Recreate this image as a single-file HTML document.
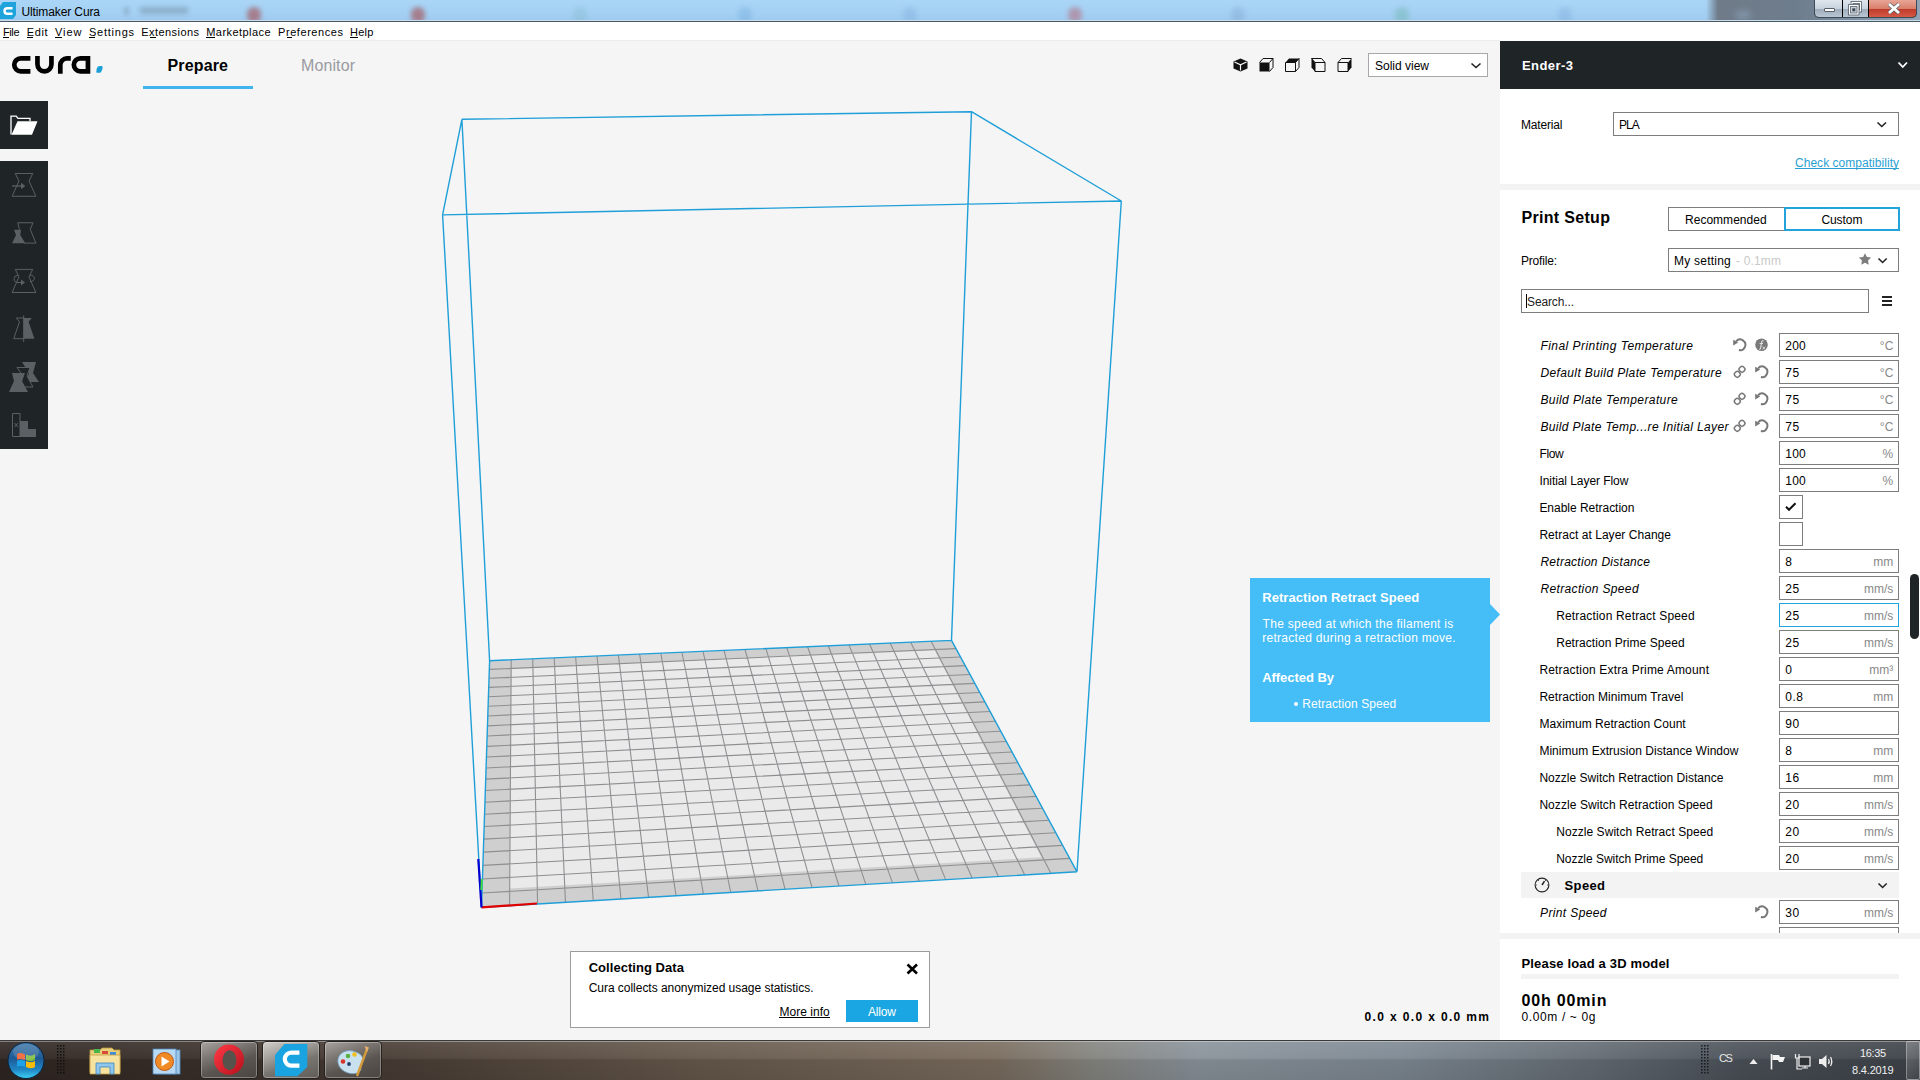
<!DOCTYPE html>
<html><head><meta charset="utf-8"><title>Ultimaker Cura</title>
<style>
html,body{margin:0;padding:0;width:1920px;height:1080px;overflow:hidden;background:#f5f5f5;font-family:"Liberation Sans",sans-serif;}
.abs{position:absolute;}
.t{position:absolute;white-space:nowrap;font-family:"Liberation Sans",sans-serif;}
.box{position:absolute;box-sizing:border-box;}
</style></head><body>

<div class="box" style="left:0;top:0;width:1920px;height:22px;background:linear-gradient(#aad5f6,#a4d0f3 60%,#9ec9ee);"></div>
<div class="box" style="left:1706px;top:0;width:214px;height:21px;background:linear-gradient(90deg,rgba(111,123,136,0) 0px,#6f7b88 12px,#6e7d8d 90px,#8797aa 180px,#93a3b6);"></div>
<div class="abs" style="left:1735px;top:10px;width:16px;height:10px;border-radius:8px;background:#8aa0b8;filter:blur(3px);opacity:.6"></div>
<div class="abs" style="left:247px;top:7px;width:14px;height:16px;border-radius:7px;background:#a56a74;filter:blur(2.5px);opacity:0.8"></div>
<div class="abs" style="left:411px;top:7px;width:14px;height:16px;border-radius:7px;background:#a56a74;filter:blur(2.5px);opacity:0.8"></div>
<div class="abs" style="left:573px;top:7px;width:14px;height:16px;border-radius:7px;background:#7fb8c8;filter:blur(2.5px);opacity:0.35"></div>
<div class="abs" style="left:738px;top:7px;width:14px;height:16px;border-radius:7px;background:#6aa6d8;filter:blur(2.5px);opacity:0.35"></div>
<div class="abs" style="left:903px;top:7px;width:14px;height:16px;border-radius:7px;background:#7aa8d8;filter:blur(2.5px);opacity:0.35"></div>
<div class="abs" style="left:1068px;top:7px;width:14px;height:16px;border-radius:7px;background:#b08aa0;filter:blur(2.5px);opacity:0.8"></div>
<div class="abs" style="left:1231px;top:7px;width:14px;height:16px;border-radius:7px;background:#7a9fc8;filter:blur(2.5px);opacity:0.35"></div>
<div class="abs" style="left:1395px;top:7px;width:14px;height:16px;border-radius:7px;background:#5fae9a;filter:blur(2.5px);opacity:0.35"></div>
<div class="abs" style="left:1558px;top:7px;width:14px;height:16px;border-radius:7px;background:#7aa8d8;filter:blur(2.5px);opacity:0.35"></div>
<div class="abs" style="left:140px;top:7px;width:48px;height:7px;background:#5a7080;filter:blur(2.5px);opacity:.35"></div>
<div class="abs" style="left:124px;top:7px;width:5px;height:8px;background:#5a7080;filter:blur(2px);opacity:.3"></div>
<div class="box" style="left:0;top:20px;width:1920px;height:1px;background:#c9dcea"></div>
<div class="box" style="left:0;top:21px;width:1920px;height:1px;background:#4b5966"></div>
<svg class="abs" style="left:0;top:2px" width="17" height="18" viewBox="0 0 17 18"><path d="M3 0H16V13L13 17H0V4Z" fill="#1ea3dc"/><path d="M12.5 6.2H7.3A2.8 2.8 0 0 0 7.3 11.8H12.5" stroke="#fff" stroke-width="2.4" fill="none"/></svg>
<div class="t" style="left:21.50px;top:6px;font-size:12px;line-height:12px;font-weight:400;font-style:normal;color:#000;letter-spacing:-0.117px;">Ultimaker Cura</div>
<div class="box" style="left:1814px;top:0;width:103px;height:18px;border:1px solid #3d4a57;border-top:none;border-radius:0 0 5px 5px;overflow:hidden;background:#000">
<div class="abs" style="left:0;top:0;width:27px;height:17px;background:linear-gradient(#dfe6ee,#c8d3de 50%,#9eabb9 52%,#b9c6d3)"></div>
<div class="abs" style="left:28px;top:0;width:25px;height:17px;background:linear-gradient(#dfe6ee,#c8d3de 50%,#9eabb9 52%,#b9c6d3)"></div>
<div class="abs" style="left:54px;top:0;width:47px;height:17px;background:linear-gradient(#e8a596,#d9806c 50%,#c0392a 52%,#d45a44)"></div>
</div>
<div class="box" style="left:1824px;top:8px;width:11px;height:4px;background:#fff;border:1px solid #55606b;border-radius:1px"></div>
<svg class="abs" style="left:1848px;top:1px" width="14" height="15" viewBox="0 0 14 15"><rect x="4" y="1.5" width="8.5" height="8.5" fill="none" stroke="#3a4550" stroke-width="2.6"/><rect x="4" y="1.5" width="8.5" height="8.5" fill="none" stroke="#fff" stroke-width="1.3"/><rect x="1.5" y="4.5" width="8.5" height="8.5" fill="#c5d0db" stroke="#3a4550" stroke-width="2.6"/><rect x="1.5" y="4.5" width="8.5" height="8.5" fill="none" stroke="#fff" stroke-width="1.3"/><rect x="4.3" y="7.3" width="3" height="3" fill="#3a4550"/></svg>
<svg class="abs" style="left:1886px;top:2px" width="16" height="13"><path d="M3 2L13 11M13 2L3 11" stroke="#59616b" stroke-width="4.2"/><path d="M3 2L13 11M13 2L3 11" stroke="#fff" stroke-width="2.8"/></svg>
<div class="box" style="left:0;top:22px;width:1920px;height:18px;background:#fff"></div>
<div class="t" style="left:3.00px;top:27px;font-size:11px;line-height:11px;font-weight:400;font-style:normal;color:#000;letter-spacing:-0.408px;">File</div>
<div class="t" style="left:26.75px;top:27px;font-size:11px;line-height:11px;font-weight:400;font-style:normal;color:#000;letter-spacing:0.600px;">Edit</div>
<div class="t" style="left:55.00px;top:27px;font-size:11px;line-height:11px;font-weight:400;font-style:normal;color:#000;letter-spacing:0.942px;">View</div>
<div class="t" style="left:89.00px;top:27px;font-size:11px;line-height:11px;font-weight:400;font-style:normal;color:#000;letter-spacing:0.750px;">Settings</div>
<div class="t" style="left:141.25px;top:27px;font-size:11px;line-height:11px;font-weight:400;font-style:normal;color:#000;letter-spacing:0.439px;">Extensions</div>
<div class="t" style="left:206.25px;top:27px;font-size:11px;line-height:11px;font-weight:400;font-style:normal;color:#000;letter-spacing:0.433px;">Marketplace</div>
<div class="t" style="left:278.00px;top:27px;font-size:11px;line-height:11px;font-weight:400;font-style:normal;color:#000;letter-spacing:0.570px;">Preferences</div>
<div class="t" style="left:350.00px;top:27px;font-size:11px;line-height:11px;font-weight:400;font-style:normal;color:#000;letter-spacing:0.208px;">Help</div>
<div class="box" style="left:3px;top:37px;width:6px;height:1px;background:#000"></div>
<div class="box" style="left:27px;top:37px;width:6px;height:1px;background:#000"></div>
<div class="box" style="left:55px;top:37px;width:7px;height:1px;background:#000"></div>
<div class="box" style="left:89px;top:37px;width:6px;height:1px;background:#000"></div>
<div class="box" style="left:150px;top:37px;width:6px;height:1px;background:#000"></div>
<div class="box" style="left:206px;top:37px;width:9px;height:1px;background:#000"></div>
<div class="box" style="left:287px;top:37px;width:5px;height:1px;background:#000"></div>
<div class="box" style="left:350px;top:37px;width:8px;height:1px;background:#000"></div>
<div class="box" style="left:0;top:40px;width:1500px;height:1px;background:#ececec"></div>
<svg class="abs" style="left:0;top:40px" width="120" height="50" viewBox="0 40 120 50">
<g stroke="#000" stroke-width="4.7" fill="none">
<path d="M30.4 58.35H20.75A6.5 6.5 0 0 0 20.75 71.35H30.4"/>
<path d="M37.45 56V64.35A7 7 0 0 0 51.45 64.35V56"/>
<path d="M60.3 73.7V65A6.65 6.65 0 0 1 66.95 58.35H70.8"/>
<path d="M87.95 73.7V58.35H80.35A6.5 6.5 0 0 0 80.35 71.35H87.95"/>
</g>
<path d="M97.8 66.6Q100 65.6 102.6 66.2Q103.2 69.5 100.8 72.4Q98.5 73.2 96.3 72.6Q96 69 97.8 66.6Z" fill="#1a9fd6"/>
</svg>
<div class="t" style="left:167.50px;top:58px;font-size:16px;line-height:16px;font-weight:700;font-style:normal;color:#000;letter-spacing:0.150px;">Prepare</div>
<div class="t" style="left:301.00px;top:58px;font-size:16px;line-height:16px;font-weight:400;font-style:normal;color:#999aa1;letter-spacing:0.108px;">Monitor</div>
<div class="box" style="left:143px;top:86px;width:110px;height:3px;background:#40b4ec"></div>
<svg class="abs" style="left:1233px;top:58px" width="15" height="14" viewBox="0 0 15 14"><path d="M7.5 0.5L14.5 3.5V10.5L7.5 13.5L0.5 10.5V3.5Z" fill="#111"/><path d="M1.5 4L7.5 6.8L13.5 4M7.5 6.8V12.5" stroke="#f5f5f5" stroke-width="1.2" fill="none"/></svg>
<svg class="abs" style="left:1259px;top:58px" width="15" height="14" viewBox="0 0 15 14"><path d="M0.5 4.5H10.5V13.5H0.5Z" fill="#111"/><path d="M0.5 4.5L4 0.5H14V9.5L10.5 13.5M10.5 4.5L14 0.5" stroke="#111" stroke-width="1" fill="none"/></svg>
<svg class="abs" style="left:1285px;top:58px" width="15" height="14" viewBox="0 0 15 14"><path d="M0.5 4.5L4 0.5H14L10.5 4.5Z" fill="#111"/><path d="M0.5 4.5H10.5V13.5H0.5ZM10.5 4.5L14 0.5V9.5L10.5 13.5" stroke="#111" stroke-width="1" fill="none"/></svg>
<svg class="abs" style="left:1311px;top:58px" width="15" height="14" viewBox="0 0 15 14"><path d="M0.5 0.5L4 4.5V13.5L0.5 9.5Z" fill="#111"/><path d="M0.5 0.5H10.5L14 4.5V13.5H4V4.5H14M0.5 0.5L4 4.5" stroke="#111" stroke-width="1" fill="none"/></svg>
<svg class="abs" style="left:1337px;top:58px" width="15" height="14" viewBox="0 0 15 14"><path d="M14.5 0.5L11 4.5V13.5L14.5 9.5Z" fill="#111"/><path d="M14.5 0.5H4.5L1 4.5V13.5H11V4.5H1" stroke="#111" stroke-width="1" fill="none"/></svg>
<div class="box" style="left:1368px;top:53px;width:120px;height:24px;background:#fff;border:1px solid #a7a7a7"></div>
<div class="t" style="left:1375.00px;top:60px;font-size:12px;line-height:12px;font-weight:400;font-style:normal;color:#000;letter-spacing:-0.006px;">Solid view</div>
<svg class="abs" style="left:1469.5px;top:61.5px" width="12" height="7" viewBox="-1 -1 12 7"><path d="M0.5 0.5L5.0 4.5L9.5 0.5" stroke="#222" stroke-width="1.6" fill="none"/></svg>
<div class="box" style="left:0;top:101px;width:48px;height:48px;background:#1f2427"></div>
<svg class="abs" style="left:10px;top:115px" width="28" height="21" viewBox="0 0 28 21"><path d="M1 19.5V1.2H6.2L8 3.4H20V6" stroke="#fff" stroke-width="1.3" fill="none"/><path d="M1.5 19.8L7.5 6.2H27.5L22 19.8Z" fill="#fff"/></svg>
<div class="box" style="left:0;top:161px;width:48px;height:288px;background:#1f2427"></div>
<svg class="abs" style="left:0;top:161px" width="48" height="288" viewBox="0 161 48 288">
<g stroke="#5b6064" stroke-width="1" fill="none">
<path d="M15.25 173.5H32.75L29 181L35.9 196.25H12.1L19 181Z"/>
<path d="M12 186H22" stroke-width="1.3"/>
</g>
<path d="M21 182.8L25.3 186L21 189.2Z" fill="#5b6064"/>
<g stroke="#5b6064" stroke-width="1" fill="none"><path d="M19.5 229.5L17.75 222.75H33L30.25 229.4L35.9 243.1H24"/></g>
<path d="M14 229.75H21L20.3 235L25.25 243.3H12.1L16 235Z" fill="#5b6064"/>
<g stroke="#5b6064" stroke-width="1" fill="none">
<path d="M15.25 269.4H32.75L29 276.9L35.9 292.5H12.1L19 276.9Z"/>
<path d="M18.2 275.3A3.6 3.2 0 1 0 18 282.5H21.5M29.8 275.3A3.6 3.2 0 1 1 30 281.5"/>
</g>
<path d="M21 279.5L25 282.5L21 285.5Z" fill="#5b6064"/>
<g stroke="#5b6064" stroke-width="1" fill="none"><path d="M23.7 318H16.3L19.5 321.8L13.7 338.7H23.7"/></g>
<path d="M23.7 318H31.8L28.6 321.8L34.4 338.7H23.7Z" fill="#5b6064"/>
<path d="M23.7 315.4V342" stroke="#5b6064" stroke-width="1"/>
<path d="M22 362H36L33 373L39 382H26L29 373Z" fill="#5b6064"/>
<path d="M17 367.5H30L27 376L33 387H20L23 376Z" fill="#1f2427" stroke="#5b6064" stroke-width="1"/>
<path d="M12 373H25L22 381L28 392H9L14 381Z" fill="#5b6064"/>
<path d="M12.5 413.5H20V436.5H12.5Z" stroke="#5b6064" stroke-width="1" fill="none"/>
<path d="M20 421H28V429H36V437H20Z" fill="#5b6064"/>
<path d="M14.5 423L18 427M18 423L14.5 427" stroke="#5b6064" stroke-width="1"/>
</svg>
<svg class="abs" style="left:0;top:0" width="1500" height="1040" viewBox="0 0 1500 1040">
<polygon points="481.50,907.40 1077.00,871.80 951.50,640.40 489.60,660.70" fill="#cfcfcf"/>
<polygon points="509.71,888.57 1041.34,857.37 934.34,649.61 511.15,668.45" fill="#eaeaeb"/>
<path d="M509.59 905.72L511.21 659.75M481.97 893.02L1069.74 858.42M537.59 904.05L532.76 658.80M482.43 879.02L1062.67 845.39M565.48 902.38L554.24 657.86M482.88 865.38L1055.78 832.68M593.27 900.72L575.67 656.92M483.32 852.10L1049.06 820.29M620.97 899.06L597.04 655.98M483.74 839.16L1042.51 808.20M648.56 897.41L618.35 655.04M484.15 826.55L1036.11 796.41M676.05 895.77L639.61 654.11M484.56 814.25L1029.87 784.90M703.45 894.13L660.80 653.18M484.95 802.25L1023.78 773.67M730.75 892.50L681.93 652.25M485.34 790.54L1017.83 762.70M757.95 890.87L703.01 651.32M485.71 779.11L1012.02 751.98M785.06 889.25L724.03 650.40M486.08 767.96L1006.34 741.51M812.07 887.64L744.99 649.48M486.44 757.06L1000.79 731.28M838.98 886.03L765.90 648.56M486.79 746.42L995.36 721.27M865.80 884.43L786.75 647.64M487.13 736.03L990.06 711.49M892.53 882.83L807.54 646.73M487.46 725.86L984.87 701.92M919.16 881.24L828.27 645.82M487.79 715.93L979.79 692.56M945.70 879.65L848.95 644.91M488.11 706.22L974.82 683.40M972.14 878.07L869.57 644.00M488.42 696.71L969.96 674.44M998.49 876.49L890.14 643.10M488.72 687.42L965.20 665.66M1024.75 874.92L910.65 642.20M489.02 678.32L960.54 657.06M1050.92 873.36L931.10 641.30M489.31 669.42L955.97 648.65" stroke="#8e8f91" stroke-width="1.1" fill="none"/>
<path d="M489.60 660.70L951.50 640.40M951.50 640.40L1077.00 871.80M1077.00 871.80L481.50 907.40M481.50 907.40L489.60 660.70M461.90 119.30L971.50 111.70M971.50 111.70L1121.30 201.00M1121.30 201.00L442.60 214.90M442.60 214.90L461.90 119.30M461.90 119.30L489.60 660.70M442.60 214.90L481.50 907.40M971.50 111.70L951.50 640.40M1121.30 201.00L1077.00 871.80" stroke="#1f9fd8" stroke-width="1.4" fill="none"/>
<path d="M481.5 907.4L537 903.5" stroke="#e00000" stroke-width="2.2"/>
<path d="M481.5 907.4L478.3 859" stroke="#0000d0" stroke-width="2.2"/>
<path d="M481.3 890L481.8 879" stroke="#40e040" stroke-width="2"/>
</svg>
<div class="box" style="left:1250px;top:578px;width:240px;height:144px;background:#45bdf6"></div>
<svg class="abs" style="left:1490px;top:604px" width="10" height="21"><path d="M0 0L10 10.5L0 21Z" fill="#45bdf6"/></svg>
<div class="t" style="left:1262.20px;top:591px;font-size:13px;line-height:13px;font-weight:700;font-style:normal;color:#fff;letter-spacing:0.073px;">Retraction Retract Speed</div>
<div class="t" style="left:1262.60px;top:618px;font-size:12px;line-height:12px;font-weight:400;font-style:normal;color:#fff;letter-spacing:0.281px;">The speed at which the filament is</div>
<div class="t" style="left:1262.20px;top:632px;font-size:12px;line-height:12px;font-weight:400;font-style:normal;color:#fff;letter-spacing:0.293px;">retracted during a retraction move.</div>
<div class="t" style="left:1262.20px;top:671px;font-size:13px;line-height:13px;font-weight:700;font-style:normal;color:#fff;letter-spacing:-0.045px;">Affected By</div>
<div class="abs" style="left:1294px;top:702px;width:4px;height:4px;border-radius:2px;background:#fff"></div>
<div class="t" style="left:1302.20px;top:698px;font-size:12px;line-height:12px;font-weight:400;font-style:normal;color:#fff;letter-spacing:0.092px;">Retraction Speed</div>
<div class="box" style="left:570px;top:951px;width:360px;height:77px;background:#fff;border:1px solid #9c9c9c"></div>
<div class="t" style="left:588.70px;top:961px;font-size:13px;line-height:13px;font-weight:700;font-style:normal;color:#000;letter-spacing:0.041px;">Collecting Data</div>
<div class="t" style="left:588.70px;top:982px;font-size:12px;line-height:12px;font-weight:400;font-style:normal;color:#000;letter-spacing:-0.032px;">Cura collects anonymized usage statistics.</div>
<svg class="abs" style="left:906px;top:963px" width="13" height="12"><path d="M1.5 1.5L11 10.5M11 1.5L1.5 10.5" stroke="#000" stroke-width="2.6"/></svg>
<div class="t" style="left:779.40px;top:1006px;font-size:12px;line-height:12px;font-weight:400;font-style:normal;color:#000;letter-spacing:0.034px;">More info</div>
<div class="box" style="left:779px;top:1017px;width:51px;height:1px;background:#000"></div>
<div class="box" style="left:846px;top:1000px;width:72px;height:22px;background:#1aa6e2"></div>
<div class="t" style="left:868.00px;top:1006px;font-size:12px;line-height:12px;font-weight:400;font-style:normal;color:#fff;letter-spacing:-0.175px;">Allow</div>
<div class="t" style="left:1364.60px;top:1011px;font-size:12px;line-height:12px;font-weight:700;font-style:normal;color:#000;letter-spacing:1.353px;">0.0 x 0.0 x 0.0 mm</div>
<div class="box" style="left:1500px;top:40px;width:420px;height:1000px;background:#fff"></div>
<div class="box" style="left:1500px;top:41px;width:420px;height:48px;background:#1f2427"></div>
<div class="t" style="left:1522.00px;top:59px;font-size:13px;line-height:13px;font-weight:700;font-style:normal;color:#fff;letter-spacing:0.433px;">Ender-3</div>
<svg class="abs" style="left:1897.3px;top:61.3px" width="11.5" height="7.5" viewBox="-1 -1 11.5 7.5"><path d="M0.5 0.5L4.75 5.0L9.0 0.5" stroke="#fff" stroke-width="1.8" fill="none"/></svg>
<div class="t" style="left:1521.00px;top:119px;font-size:12px;line-height:12px;font-weight:400;font-style:normal;color:#000;letter-spacing:-0.168px;">Material</div>
<div class="box" style="left:1613px;top:112px;width:286px;height:24px;background:#fff;border:1px solid #7d7d7d"></div>
<div class="t" style="left:1619.00px;top:119px;font-size:12px;line-height:12px;font-weight:400;font-style:normal;color:#000;letter-spacing:-0.988px;">PLA</div>
<svg class="abs" style="left:1876.3px;top:120.6px" width="11.5" height="7" viewBox="-1 -1 11.5 7"><path d="M0.5 0.5L4.75 4.5L9.0 0.5" stroke="#222" stroke-width="1.6" fill="none"/></svg>
<div class="t" style="left:1795.00px;top:157px;font-size:12px;line-height:12px;font-weight:400;font-style:normal;color:#2a9fd3;letter-spacing:0.035px;">Check compatibility</div>
<div class="box" style="left:1795px;top:168px;width:104px;height:1px;background:#2a9fd3"></div>
<div class="box" style="left:1500px;top:184px;width:420px;height:6px;background:#f3f3f3"></div>
<div class="t" style="left:1521.40px;top:210px;font-size:16px;line-height:16px;font-weight:700;font-style:normal;color:#000;letter-spacing:0.327px;">Print Setup</div>
<div class="box" style="left:1668px;top:207px;width:117px;height:24px;background:#fff;border:1px solid #7d7d7d"></div>
<div class="box" style="left:1784px;top:207px;width:116px;height:24px;background:#fff;border:2px solid #22a3d9"></div>
<div class="t" style="left:1685.00px;top:214px;font-size:12px;line-height:12px;font-weight:400;font-style:normal;color:#000;letter-spacing:0.022px;">Recommended</div>
<div class="t" style="left:1821.40px;top:214px;font-size:12px;line-height:12px;font-weight:400;font-style:normal;color:#000;letter-spacing:-0.070px;">Custom</div>
<div class="t" style="left:1521.00px;top:255px;font-size:12px;line-height:12px;font-weight:400;font-style:normal;color:#000;letter-spacing:-0.193px;">Profile:</div>
<div class="box" style="left:1668px;top:248px;width:231px;height:24px;background:#fff;border:1px solid #7d7d7d"></div>
<div class="t" style="left:1674.00px;top:255px;font-size:12px;line-height:12px;font-weight:400;font-style:normal;color:#000;letter-spacing:0.225px;">My setting</div>
<div class="t" style="left:1736.00px;top:255px;font-size:12px;line-height:12px;font-weight:400;font-style:normal;color:#c9c9c9;letter-spacing:0.167px;">- 0.1mm</div>
<svg class="abs" style="left:1858px;top:253px" width="14" height="13" viewBox="0 0 13 13"><polygon points="6.50,0.20 8.38,4.01 12.59,4.62 9.54,7.59 10.26,11.78 6.50,9.80 2.74,11.78 3.46,7.59 0.41,4.62 4.62,4.01" fill="#7d7d7d"/></svg>
<svg class="abs" style="left:1876.5px;top:256.5px" width="11.2" height="7" viewBox="-1 -1 11.2 7"><path d="M0.5 0.5L4.6 4.5L8.7 0.5" stroke="#222" stroke-width="1.6" fill="none"/></svg>
<div class="box" style="left:1521px;top:289px;width:348px;height:24px;background:#fff;border:1px solid #7d7d7d"></div>
<div class="box" style="left:1526px;top:294px;width:1px;height:14px;background:#000"></div>
<div class="t" style="left:1527.00px;top:296px;font-size:12px;line-height:12px;font-weight:400;font-style:normal;color:#222;letter-spacing:-0.128px;">Search...</div>
<div class="box" style="left:1882px;top:296px;width:10px;height:2px;background:#222"></div>
<div class="box" style="left:1882px;top:300px;width:10px;height:2px;background:#222"></div>
<div class="box" style="left:1882px;top:304px;width:10px;height:2px;background:#222"></div>
<div class="abs" style="left:0;top:0;width:1920px;height:1080px;clip-path:inset(330px 0 147px 1500px)">
<div class="t" style="left:1540.40px;top:340px;font-size:12px;line-height:12px;font-weight:400;font-style:italic;color:#000;letter-spacing:0.462px;">Final Printing Temperature</div>
<svg class="abs" style="left:1733px;top:338px" width="14" height="14" viewBox="0 0 14 14"><path d="M3.1 3.3A5.3 5.3 0 1 1 5.9 12" stroke="#777" stroke-width="1.9" fill="none"/><path d="M0.2 1.8V7.4L5.2 4.4Z" fill="#777"/></svg>
<svg class="abs" style="left:1755px;top:338px" width="14" height="14" viewBox="0 0 14 14"><circle cx="6.5" cy="6.8" r="6.3" fill="#7a7a7a"/><path d="M8.6 2.9Q6.9 2.4 6.6 4.4L5.6 10.2Q5.4 11.6 4.2 11.5M4.6 5.5H8" stroke="#e0e0e0" stroke-width="1.1" fill="none"/><path d="M7.6 8.6L10.2 11.4M10.2 8.6L7.6 11.4" stroke="#e0e0e0" stroke-width=".9"/></svg>
<div class="box" style="left:1779px;top:333px;width:120px;height:24px;background:#fff;border:1px solid #7d7d7d"></div>
<div class="t" style="left:1785.30px;top:340px;font-size:12px;line-height:12px;font-weight:400;font-style:normal;color:#000;letter-spacing:0.238px;">200</div>
<div class="t" style="left:1879.83px;top:340px;font-size:12px;line-height:12px;font-weight:400;font-style:normal;color:#888;">°C</div>
<div class="t" style="left:1540.40px;top:367px;font-size:12px;line-height:12px;font-weight:400;font-style:italic;color:#000;letter-spacing:0.385px;">Default Build Plate Temperature</div>
<svg class="abs" style="left:1733px;top:365px" width="14" height="14" viewBox="0 0 14 14"><g stroke="#777" stroke-width="1.5" fill="none"><rect x="6.3" y="1.6" width="5.4" height="5.4" rx="2.2" transform="rotate(45 9 4.3)"/><rect x="1.6" y="6.6" width="5.4" height="5.4" rx="2.2" transform="rotate(45 4.3 9.3)"/></g></svg>
<svg class="abs" style="left:1755px;top:365px" width="14" height="14" viewBox="0 0 14 14"><path d="M3.1 3.3A5.3 5.3 0 1 1 5.9 12" stroke="#777" stroke-width="1.9" fill="none"/><path d="M0.2 1.8V7.4L5.2 4.4Z" fill="#777"/></svg>
<div class="box" style="left:1779px;top:360px;width:120px;height:24px;background:#fff;border:1px solid #7d7d7d"></div>
<div class="t" style="left:1785.30px;top:367px;font-size:12px;line-height:12px;font-weight:400;font-style:normal;color:#000;letter-spacing:0.550px;">75</div>
<div class="t" style="left:1879.83px;top:367px;font-size:12px;line-height:12px;font-weight:400;font-style:normal;color:#888;">°C</div>
<div class="t" style="left:1540.40px;top:394px;font-size:12px;line-height:12px;font-weight:400;font-style:italic;color:#000;letter-spacing:0.414px;">Build Plate Temperature</div>
<svg class="abs" style="left:1733px;top:392px" width="14" height="14" viewBox="0 0 14 14"><g stroke="#777" stroke-width="1.5" fill="none"><rect x="6.3" y="1.6" width="5.4" height="5.4" rx="2.2" transform="rotate(45 9 4.3)"/><rect x="1.6" y="6.6" width="5.4" height="5.4" rx="2.2" transform="rotate(45 4.3 9.3)"/></g></svg>
<svg class="abs" style="left:1755px;top:392px" width="14" height="14" viewBox="0 0 14 14"><path d="M3.1 3.3A5.3 5.3 0 1 1 5.9 12" stroke="#777" stroke-width="1.9" fill="none"/><path d="M0.2 1.8V7.4L5.2 4.4Z" fill="#777"/></svg>
<div class="box" style="left:1779px;top:387px;width:120px;height:24px;background:#fff;border:1px solid #7d7d7d"></div>
<div class="t" style="left:1785.30px;top:394px;font-size:12px;line-height:12px;font-weight:400;font-style:normal;color:#000;letter-spacing:0.550px;">75</div>
<div class="t" style="left:1879.83px;top:394px;font-size:12px;line-height:12px;font-weight:400;font-style:normal;color:#888;">°C</div>
<div class="t" style="left:1540.40px;top:421px;font-size:12px;line-height:12px;font-weight:400;font-style:italic;color:#000;letter-spacing:0.365px;">Build Plate Temp...re Initial Layer</div>
<svg class="abs" style="left:1733px;top:419px" width="14" height="14" viewBox="0 0 14 14"><g stroke="#777" stroke-width="1.5" fill="none"><rect x="6.3" y="1.6" width="5.4" height="5.4" rx="2.2" transform="rotate(45 9 4.3)"/><rect x="1.6" y="6.6" width="5.4" height="5.4" rx="2.2" transform="rotate(45 4.3 9.3)"/></g></svg>
<svg class="abs" style="left:1755px;top:419px" width="14" height="14" viewBox="0 0 14 14"><path d="M3.1 3.3A5.3 5.3 0 1 1 5.9 12" stroke="#777" stroke-width="1.9" fill="none"/><path d="M0.2 1.8V7.4L5.2 4.4Z" fill="#777"/></svg>
<div class="box" style="left:1779px;top:414px;width:120px;height:24px;background:#fff;border:1px solid #7d7d7d"></div>
<div class="t" style="left:1785.30px;top:421px;font-size:12px;line-height:12px;font-weight:400;font-style:normal;color:#000;letter-spacing:0.550px;">75</div>
<div class="t" style="left:1879.83px;top:421px;font-size:12px;line-height:12px;font-weight:400;font-style:normal;color:#888;">°C</div>
<div class="t" style="left:1539.40px;top:448px;font-size:12px;line-height:12px;font-weight:400;font-style:normal;color:#000;letter-spacing:-0.342px;">Flow</div>
<div class="box" style="left:1779px;top:441px;width:120px;height:24px;background:#fff;border:1px solid #7d7d7d"></div>
<div class="t" style="left:1785.30px;top:448px;font-size:12px;line-height:12px;font-weight:400;font-style:normal;color:#000;letter-spacing:0.238px;">100</div>
<div class="t" style="left:1882.62px;top:448px;font-size:12px;line-height:12px;font-weight:400;font-style:normal;color:#888;">%</div>
<div class="t" style="left:1539.40px;top:475px;font-size:12px;line-height:12px;font-weight:400;font-style:normal;color:#000;letter-spacing:-0.063px;">Initial Layer Flow</div>
<div class="box" style="left:1779px;top:468px;width:120px;height:24px;background:#fff;border:1px solid #7d7d7d"></div>
<div class="t" style="left:1785.30px;top:475px;font-size:12px;line-height:12px;font-weight:400;font-style:normal;color:#000;letter-spacing:0.238px;">100</div>
<div class="t" style="left:1882.62px;top:475px;font-size:12px;line-height:12px;font-weight:400;font-style:normal;color:#888;">%</div>
<div class="t" style="left:1539.40px;top:502px;font-size:12px;line-height:12px;font-weight:400;font-style:normal;color:#000;letter-spacing:-0.025px;">Enable Retraction</div>
<div class="box" style="left:1779px;top:495px;width:24px;height:24px;background:#fff;border:1px solid #7d7d7d"></div>
<svg class="abs" style="left:1785px;top:502px" width="12" height="10"><path d="M1 4.8L4 7.8L10.5 1.2" stroke="#111" stroke-width="2" fill="none"/></svg>
<div class="t" style="left:1539.40px;top:529px;font-size:12px;line-height:12px;font-weight:400;font-style:normal;color:#000;letter-spacing:0.039px;">Retract at Layer Change</div>
<div class="box" style="left:1779px;top:522px;width:24px;height:24px;background:#fff;border:1px solid #7d7d7d"></div>
<div class="t" style="left:1540.40px;top:556px;font-size:12px;line-height:12px;font-weight:400;font-style:italic;color:#000;letter-spacing:0.271px;">Retraction Distance</div>
<div class="box" style="left:1779px;top:549px;width:120px;height:24px;background:#fff;border:1px solid #7d7d7d"></div>
<div class="t" style="left:1785.30px;top:556px;font-size:12px;line-height:12px;font-weight:400;font-style:normal;color:#000;">8</div>
<div class="t" style="left:1873.30px;top:556px;font-size:12px;line-height:12px;font-weight:400;font-style:normal;color:#888;">mm</div>
<div class="t" style="left:1540.40px;top:583px;font-size:12px;line-height:12px;font-weight:400;font-style:italic;color:#000;letter-spacing:0.363px;">Retraction Speed</div>
<div class="box" style="left:1779px;top:576px;width:120px;height:24px;background:#fff;border:1px solid #7d7d7d"></div>
<div class="t" style="left:1785.30px;top:583px;font-size:12px;line-height:12px;font-weight:400;font-style:normal;color:#000;letter-spacing:0.550px;">25</div>
<div class="t" style="left:1863.97px;top:583px;font-size:12px;line-height:12px;font-weight:400;font-style:normal;color:#888;">mm/s</div>
<div class="t" style="left:1556.20px;top:610px;font-size:12px;line-height:12px;font-weight:400;font-style:normal;color:#000;letter-spacing:0.160px;">Retraction Retract Speed</div>
<div class="box" style="left:1779px;top:603px;width:120px;height:24px;background:#fff;border:1px solid #22a3d9"></div>
<div class="t" style="left:1785.30px;top:610px;font-size:12px;line-height:12px;font-weight:400;font-style:normal;color:#000;letter-spacing:0.550px;">25</div>
<div class="t" style="left:1863.97px;top:610px;font-size:12px;line-height:12px;font-weight:400;font-style:normal;color:#888;">mm/s</div>
<div class="t" style="left:1556.20px;top:637px;font-size:12px;line-height:12px;font-weight:400;font-style:normal;color:#000;letter-spacing:0.048px;">Retraction Prime Speed</div>
<div class="box" style="left:1779px;top:630px;width:120px;height:24px;background:#fff;border:1px solid #7d7d7d"></div>
<div class="t" style="left:1785.30px;top:637px;font-size:12px;line-height:12px;font-weight:400;font-style:normal;color:#000;letter-spacing:0.550px;">25</div>
<div class="t" style="left:1863.97px;top:637px;font-size:12px;line-height:12px;font-weight:400;font-style:normal;color:#888;">mm/s</div>
<div class="t" style="left:1539.40px;top:664px;font-size:12px;line-height:12px;font-weight:400;font-style:normal;color:#000;letter-spacing:0.174px;">Retraction Extra Prime Amount</div>
<div class="box" style="left:1779px;top:657px;width:120px;height:24px;background:#fff;border:1px solid #7d7d7d"></div>
<div class="t" style="left:1785.30px;top:664px;font-size:12px;line-height:12px;font-weight:400;font-style:normal;color:#000;">0</div>
<div class="t" style="left:1869.30px;top:664px;font-size:12px;line-height:12px;font-weight:400;font-style:normal;color:#888;">mm³</div>
<div class="t" style="left:1539.40px;top:691px;font-size:12px;line-height:12px;font-weight:400;font-style:normal;color:#000;letter-spacing:0.054px;">Retraction Minimum Travel</div>
<div class="box" style="left:1779px;top:684px;width:120px;height:24px;background:#fff;border:1px solid #7d7d7d"></div>
<div class="t" style="left:1785.30px;top:691px;font-size:12px;line-height:12px;font-weight:400;font-style:normal;color:#000;letter-spacing:0.512px;">0.8</div>
<div class="t" style="left:1873.30px;top:691px;font-size:12px;line-height:12px;font-weight:400;font-style:normal;color:#888;">mm</div>
<div class="t" style="left:1539.40px;top:718px;font-size:12px;line-height:12px;font-weight:400;font-style:normal;color:#000;letter-spacing:0.040px;">Maximum Retraction Count</div>
<div class="box" style="left:1779px;top:711px;width:120px;height:24px;background:#fff;border:1px solid #7d7d7d"></div>
<div class="t" style="left:1785.30px;top:718px;font-size:12px;line-height:12px;font-weight:400;font-style:normal;color:#000;letter-spacing:0.550px;">90</div>
<div class="t" style="left:1539.40px;top:745px;font-size:12px;line-height:12px;font-weight:400;font-style:normal;color:#000;letter-spacing:0.031px;">Minimum Extrusion Distance Window</div>
<div class="box" style="left:1779px;top:738px;width:120px;height:24px;background:#fff;border:1px solid #7d7d7d"></div>
<div class="t" style="left:1785.30px;top:745px;font-size:12px;line-height:12px;font-weight:400;font-style:normal;color:#000;">8</div>
<div class="t" style="left:1873.30px;top:745px;font-size:12px;line-height:12px;font-weight:400;font-style:normal;color:#888;">mm</div>
<div class="t" style="left:1539.40px;top:772px;font-size:12px;line-height:12px;font-weight:400;font-style:normal;color:#000;letter-spacing:0.019px;">Nozzle Switch Retraction Distance</div>
<div class="box" style="left:1779px;top:765px;width:120px;height:24px;background:#fff;border:1px solid #7d7d7d"></div>
<div class="t" style="left:1785.30px;top:772px;font-size:12px;line-height:12px;font-weight:400;font-style:normal;color:#000;letter-spacing:0.550px;">16</div>
<div class="t" style="left:1873.30px;top:772px;font-size:12px;line-height:12px;font-weight:400;font-style:normal;color:#888;">mm</div>
<div class="t" style="left:1539.40px;top:799px;font-size:12px;line-height:12px;font-weight:400;font-style:normal;color:#000;letter-spacing:0.068px;">Nozzle Switch Retraction Speed</div>
<div class="box" style="left:1779px;top:792px;width:120px;height:24px;background:#fff;border:1px solid #7d7d7d"></div>
<div class="t" style="left:1785.30px;top:799px;font-size:12px;line-height:12px;font-weight:400;font-style:normal;color:#000;letter-spacing:0.550px;">20</div>
<div class="t" style="left:1863.97px;top:799px;font-size:12px;line-height:12px;font-weight:400;font-style:normal;color:#888;">mm/s</div>
<div class="t" style="left:1556.20px;top:826px;font-size:12px;line-height:12px;font-weight:400;font-style:normal;color:#000;letter-spacing:0.058px;">Nozzle Switch Retract Speed</div>
<div class="box" style="left:1779px;top:819px;width:120px;height:24px;background:#fff;border:1px solid #7d7d7d"></div>
<div class="t" style="left:1785.30px;top:826px;font-size:12px;line-height:12px;font-weight:400;font-style:normal;color:#000;letter-spacing:0.550px;">20</div>
<div class="t" style="left:1863.97px;top:826px;font-size:12px;line-height:12px;font-weight:400;font-style:normal;color:#888;">mm/s</div>
<div class="t" style="left:1556.20px;top:853px;font-size:12px;line-height:12px;font-weight:400;font-style:normal;color:#000;letter-spacing:-0.040px;">Nozzle Switch Prime Speed</div>
<div class="box" style="left:1779px;top:846px;width:120px;height:24px;background:#fff;border:1px solid #7d7d7d"></div>
<div class="t" style="left:1785.30px;top:853px;font-size:12px;line-height:12px;font-weight:400;font-style:normal;color:#000;letter-spacing:0.550px;">20</div>
<div class="t" style="left:1863.97px;top:853px;font-size:12px;line-height:12px;font-weight:400;font-style:normal;color:#888;">mm/s</div>
<div class="box" style="left:1521px;top:872px;width:378px;height:26px;background:#f3f3f3"></div>
<svg class="abs" style="left:1534px;top:877px" width="16" height="16" viewBox="0 0 16 16"><circle cx="8" cy="8" r="6.9" stroke="#222" stroke-width="1.1" fill="none"/><path d="M8 8L10.5 4.2" stroke="#222" stroke-width="1.5"/><path d="M4 2.8L4.6 3.8M12 2.8L11.4 3.8M1.7 8H2.7M14.3 8H13.3" stroke="#222" stroke-width="1"/></svg>
<div class="t" style="left:1564.60px;top:879px;font-size:13px;line-height:13px;font-weight:700;font-style:normal;color:#000;letter-spacing:0.344px;">Speed</div>
<svg class="abs" style="left:1876.8px;top:881.6px" width="11.2" height="7" viewBox="-1 -1 11.2 7"><path d="M0.5 0.5L4.6 4.5L8.7 0.5" stroke="#222" stroke-width="1.6" fill="none"/></svg>
<div class="t" style="left:1540.00px;top:907px;font-size:12px;line-height:12px;font-weight:400;font-style:italic;color:#000;letter-spacing:0.377px;">Print Speed</div>
<svg class="abs" style="left:1755px;top:905px" width="14" height="14" viewBox="0 0 14 14"><path d="M3.1 3.3A5.3 5.3 0 1 1 5.9 12" stroke="#777" stroke-width="1.9" fill="none"/><path d="M0.2 1.8V7.4L5.2 4.4Z" fill="#777"/></svg>
<div class="box" style="left:1779px;top:900px;width:120px;height:24px;background:#fff;border:1px solid #7d7d7d"></div>
<div class="t" style="left:1785.30px;top:907px;font-size:12px;line-height:12px;font-weight:400;font-style:normal;color:#000;letter-spacing:0.550px;">30</div>
<div class="t" style="left:1863.97px;top:907px;font-size:12px;line-height:12px;font-weight:400;font-style:normal;color:#888;">mm/s</div>
<div class="box" style="left:1779px;top:927px;width:120px;height:24px;background:#fff;border:1px solid #7d7d7d"></div>
</div>
<div class="box" style="left:1910px;top:574px;width:9px;height:65px;border-radius:4.5px;background:#1f2427"></div>
<div class="box" style="left:1500px;top:933px;width:420px;height:6px;background:#f3f3f3"></div>
<div class="t" style="left:1521.50px;top:957px;font-size:13px;line-height:13px;font-weight:700;font-style:normal;color:#000;letter-spacing:0.162px;">Please load a 3D model</div>
<div class="box" style="left:1521px;top:974px;width:378px;height:5px;background:#f3f3f3"></div>
<div class="t" style="left:1521.50px;top:993px;font-size:16px;line-height:16px;font-weight:700;font-style:normal;color:#000;letter-spacing:0.831px;">00h 00min</div>
<div class="t" style="left:1521.50px;top:1011px;font-size:12px;line-height:12px;font-weight:400;font-style:normal;color:#000;letter-spacing:0.623px;">0.00m / ~ 0g</div>
<div class="box" style="left:0;top:1040px;width:1920px;height:40px;background:linear-gradient(90deg,#2f2622 0%,#3a302a 10%,#4a3e36 21%,#65584b 36%,#7a6d5f 52%,#858580 57%,#8a939b 62.5%,#7e8993 73%,#646c74 83%,#4a5057 91%,#3e4349 100%)"></div>
<div class="box" style="left:0;top:1040px;width:1920px;height:40px;background:linear-gradient(rgba(255,255,255,.10),rgba(255,255,255,.04) 45%,rgba(0,0,0,.08) 50%,rgba(0,0,0,.12))"></div>
<div class="box" style="left:0;top:1040px;width:1920px;height:1px;background:#3a3a3a"></div>
<div class="box" style="left:0;top:1041px;width:1920px;height:1px;background:rgba(255,255,255,.35)"></div>
<svg class="abs" style="left:6px;top:1041px" width="40" height="39" viewBox="0 0 40 39">
<defs><linearGradient id="orb" x1="0" y1="0" x2="0" y2="1"><stop offset="0" stop-color="#3f77a8"/><stop offset=".45" stop-color="#1d5a95"/><stop offset=".75" stop-color="#1f86c4"/><stop offset="1" stop-color="#3fd2f5"/></linearGradient></defs>
<circle cx="20" cy="19.5" r="18" fill="url(#orb)" stroke="#0a2440" stroke-width="1"/>
<path d="M11 13Q14 11 19 13.5V19Q14 17 11 19Z" fill="#f05a28"/>
<path d="M20 13.5Q25 16 29 13V19Q25 21.5 20 19Z" fill="#7cbb3a"/>
<path d="M11 20Q14 18 19 20V26Q14 24 11 26Z" fill="#1ea1e8"/>
<path d="M20 20Q25 22.5 29 20V26Q25 28.5 20 26Z" fill="#fbbc09"/>
<ellipse cx="20" cy="11" rx="13" ry="8" fill="rgba(255,255,255,.15)"/>
</svg>
<svg class="abs" style="left:57px;top:1045px" width="9" height="31"><rect x="0" y="0" width="1.5" height="1.5" fill="#111"/><rect x="0" y="3" width="1.5" height="1.5" fill="#111"/><rect x="0" y="6" width="1.5" height="1.5" fill="#111"/><rect x="0" y="9" width="1.5" height="1.5" fill="#111"/><rect x="0" y="12" width="1.5" height="1.5" fill="#111"/><rect x="0" y="15" width="1.5" height="1.5" fill="#111"/><rect x="0" y="18" width="1.5" height="1.5" fill="#111"/><rect x="0" y="21" width="1.5" height="1.5" fill="#111"/><rect x="0" y="24" width="1.5" height="1.5" fill="#111"/><rect x="0" y="27" width="1.5" height="1.5" fill="#111"/><rect x="3" y="0" width="1.5" height="1.5" fill="#111"/><rect x="3" y="3" width="1.5" height="1.5" fill="#111"/><rect x="3" y="6" width="1.5" height="1.5" fill="#111"/><rect x="3" y="9" width="1.5" height="1.5" fill="#111"/><rect x="3" y="12" width="1.5" height="1.5" fill="#111"/><rect x="3" y="15" width="1.5" height="1.5" fill="#111"/><rect x="3" y="18" width="1.5" height="1.5" fill="#111"/><rect x="3" y="21" width="1.5" height="1.5" fill="#111"/><rect x="3" y="24" width="1.5" height="1.5" fill="#111"/><rect x="3" y="27" width="1.5" height="1.5" fill="#111"/><rect x="6" y="0" width="1.5" height="1.5" fill="#111"/><rect x="6" y="3" width="1.5" height="1.5" fill="#111"/><rect x="6" y="6" width="1.5" height="1.5" fill="#111"/><rect x="6" y="9" width="1.5" height="1.5" fill="#111"/><rect x="6" y="12" width="1.5" height="1.5" fill="#111"/><rect x="6" y="15" width="1.5" height="1.5" fill="#111"/><rect x="6" y="18" width="1.5" height="1.5" fill="#111"/><rect x="6" y="21" width="1.5" height="1.5" fill="#111"/><rect x="6" y="24" width="1.5" height="1.5" fill="#111"/><rect x="6" y="27" width="1.5" height="1.5" fill="#111"/></svg>
<svg class="abs" style="left:88px;top:1046px" width="34" height="30" viewBox="0 0 34 30">
<path d="M2 4H12L14 2H24L26 4H32V26H2Z" fill="#e8cf7a" stroke="#b8963a" stroke-width=".8"/>
<path d="M6 3H12V7H6Z" fill="#49b54a"/><path d="M14 5H20V8H14Z" fill="#d94a3a"/><path d="M22 6H28V9H22Z" fill="#3e8ed8"/>
<path d="M2 9H32V28H2Z" fill="#f6e3a0" stroke="#c2a048" stroke-width=".8"/>
<path d="M8 28V17H26V28H22V21H12V28Z" fill="#8fc6ea" stroke="#3c87c4" stroke-width=".8"/>
</svg>
<svg class="abs" style="left:151px;top:1048px" width="31" height="28" viewBox="0 0 31 28">
<rect x="5" y="2" width="24" height="24" fill="#9dc8ea" stroke="#5a8fbd" stroke-width=".8"/>
<rect x="2" y="1" width="23" height="25" fill="#b7d9f3" stroke="#4e86b8" stroke-width=".8"/>
<circle cx="13.5" cy="13.5" r="9" fill="#f08a24" stroke="#c15a10" stroke-width="1"/>
<path d="M10.5 8.5L18.5 13.5L10.5 18.5Z" fill="#fff"/>
</svg>
<div class="box" style="left:200px;top:1041px;width:58px;height:38px;border:1px solid #262220;border-radius:4px;background:linear-gradient(160deg,#a9a49f 0%,#7f7a75 30%,#5a5550 60%,#4a4541 100%);box-shadow:inset 0 0 0 1px rgba(255,255,255,.30)"></div>
<div class="box" style="left:262px;top:1041px;width:58px;height:38px;border:1px solid #262220;border-radius:4px;background:linear-gradient(160deg,#d2cfcc 0%,#a7a39f 30%,#77736f 60%,#605c58 100%);box-shadow:inset 0 0 0 1px rgba(255,255,255,.30)"></div>
<div class="box" style="left:324px;top:1041px;width:58px;height:38px;border:1px solid #262220;border-radius:4px;background:linear-gradient(160deg,#a9a49f 0%,#7f7a75 30%,#5a5550 60%,#4a4541 100%);box-shadow:inset 0 0 0 1px rgba(255,255,255,.30)"></div>
<svg class="abs" style="left:213px;top:1044px" width="33" height="32" viewBox="0 0 33 32"><defs><linearGradient id="op" x1="0" y1="0" x2="1" y2="1"><stop offset="0" stop-color="#ff3a45"/><stop offset="1" stop-color="#b5101c"/></linearGradient></defs><ellipse cx="16" cy="15.6" rx="15" ry="15.2" fill="url(#op)"/><ellipse cx="16.5" cy="16.2" rx="7" ry="10" fill="#58524d"/></svg>
<svg class="abs" style="left:275px;top:1044px" width="33" height="33" viewBox="0 0 33 33"><path d="M9.4 0H32.3V22.9L22.4 32.3H0V11Z" fill="#19a3e0"/><path d="M24.4 8.6H16.3A6.5 6.5 0 0 0 16.3 21.6H24.4" stroke="#fff" stroke-width="4.2" fill="none"/></svg>
<svg class="abs" style="left:336px;top:1044px" width="34" height="34" viewBox="0 0 34 34">
<path d="M2 19C0.5 11 8 5 17 7C25 9 29 14 26 19C23 23 27 25 23 28C18 32 4 29 2 19Z" fill="#c9e0ee" stroke="#6f9cbb" stroke-width=".9"/>
<circle cx="7" cy="17.5" r="2.3" fill="#d8342a"/><circle cx="12" cy="12" r="2.3" fill="#5ab040"/><circle cx="18.5" cy="10.5" r="2.3" fill="#f0c020"/><circle cx="13" cy="20" r="1.9" fill="#243f6e"/>
<path d="M31 5L21 32" stroke="#d59a3a" stroke-width="2.4"/><path d="M28.5 2L33 3.5L31 8Z" fill="#e5b070"/>
</svg>
<svg class="abs" style="left:1701px;top:1045px" width="9" height="31"><rect x="0" y="0" width="1.5" height="1.5" fill="#1a1d20"/><rect x="0" y="3" width="1.5" height="1.5" fill="#1a1d20"/><rect x="0" y="6" width="1.5" height="1.5" fill="#1a1d20"/><rect x="0" y="9" width="1.5" height="1.5" fill="#1a1d20"/><rect x="0" y="12" width="1.5" height="1.5" fill="#1a1d20"/><rect x="0" y="15" width="1.5" height="1.5" fill="#1a1d20"/><rect x="0" y="18" width="1.5" height="1.5" fill="#1a1d20"/><rect x="0" y="21" width="1.5" height="1.5" fill="#1a1d20"/><rect x="0" y="24" width="1.5" height="1.5" fill="#1a1d20"/><rect x="0" y="27" width="1.5" height="1.5" fill="#1a1d20"/><rect x="3" y="0" width="1.5" height="1.5" fill="#1a1d20"/><rect x="3" y="3" width="1.5" height="1.5" fill="#1a1d20"/><rect x="3" y="6" width="1.5" height="1.5" fill="#1a1d20"/><rect x="3" y="9" width="1.5" height="1.5" fill="#1a1d20"/><rect x="3" y="12" width="1.5" height="1.5" fill="#1a1d20"/><rect x="3" y="15" width="1.5" height="1.5" fill="#1a1d20"/><rect x="3" y="18" width="1.5" height="1.5" fill="#1a1d20"/><rect x="3" y="21" width="1.5" height="1.5" fill="#1a1d20"/><rect x="3" y="24" width="1.5" height="1.5" fill="#1a1d20"/><rect x="3" y="27" width="1.5" height="1.5" fill="#1a1d20"/><rect x="6" y="0" width="1.5" height="1.5" fill="#1a1d20"/><rect x="6" y="3" width="1.5" height="1.5" fill="#1a1d20"/><rect x="6" y="6" width="1.5" height="1.5" fill="#1a1d20"/><rect x="6" y="9" width="1.5" height="1.5" fill="#1a1d20"/><rect x="6" y="12" width="1.5" height="1.5" fill="#1a1d20"/><rect x="6" y="15" width="1.5" height="1.5" fill="#1a1d20"/><rect x="6" y="18" width="1.5" height="1.5" fill="#1a1d20"/><rect x="6" y="21" width="1.5" height="1.5" fill="#1a1d20"/><rect x="6" y="24" width="1.5" height="1.5" fill="#1a1d20"/><rect x="6" y="27" width="1.5" height="1.5" fill="#1a1d20"/></svg>
<div class="t" style="left:1719.00px;top:1053px;font-size:11px;line-height:11px;font-weight:400;font-style:normal;color:#e6e6e6;letter-spacing:-1.475px;">CS</div>
<svg class="abs" style="left:1749px;top:1058px" width="10" height="7"><path d="M0.5 6L4.5 1L8.5 6Z" fill="#eee"/></svg>
<svg class="abs" style="left:1770px;top:1053px" width="16" height="17" viewBox="0 0 16 17"><path d="M1.5 1V16.5" stroke="#f4f4f4" stroke-width="1.6"/><path d="M2.5 2H9L10 4H15L13 9H9L8 7H2.5Z" fill="#f4f4f4"/></svg>
<svg class="abs" style="left:1794px;top:1053px" width="17" height="17" viewBox="0 0 17 17"><rect x="5" y="4" width="11" height="9" fill="#2e3338" stroke="#eee" stroke-width="1.2"/><path d="M8 15H14M11 13V15" stroke="#eee" stroke-width="1.2"/><path d="M1.5 1V5H5V1M3 5V16H8" stroke="#eee" stroke-width="1.2" fill="none"/></svg>
<svg class="abs" style="left:1818px;top:1054px" width="16" height="15" viewBox="0 0 16 15"><path d="M1 5H4L8.5 1V14L4 10H1Z" fill="#eee"/><path d="M10.5 5Q12 7.5 10.5 10M12.5 3Q15 7.5 12.5 12" stroke="#eee" stroke-width="1.3" fill="none"/></svg>
<div class="t" style="left:1860.00px;top:1048px;font-size:11px;line-height:11px;font-weight:400;font-style:normal;color:#f0f0f0;letter-spacing:-0.331px;">16:35</div>
<div class="t" style="left:1852.00px;top:1065px;font-size:11px;line-height:11px;font-weight:400;font-style:normal;color:#f0f0f0;letter-spacing:-0.175px;">8.4.2019</div>
<div class="box" style="left:1906px;top:1041px;width:14px;height:39px;border:1px solid rgba(255,255,255,.35);border-radius:2px;background:linear-gradient(135deg,rgba(255,255,255,.25),rgba(255,255,255,.05))"></div>
</body></html>
